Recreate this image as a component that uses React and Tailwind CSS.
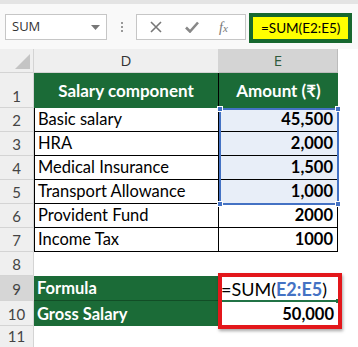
import React from 'react';

const rows = [
  { n: 1, h: 35 },
  { n: 2, h: 24, d: 'Basic salary', e: '45,500', sel: true },
  { n: 3, h: 24, d: 'HRA', e: '2,000', sel: true },
  { n: 4, h: 24, d: 'Medical Insurance', e: '1,500', sel: true },
  { n: 5, h: 24, d: 'Transport Allowance', e: '1,000', sel: true },
  { n: 6, h: 24, d: 'Provident Fund', e: '2000' },
  { n: 7, h: 24, d: 'Income Tax', e: '1000' },
  { n: 8, h: 24 },
  { n: 9, h: 25 },
  { n: 10, h: 25 },
  { n: 11, h: 22 },
];

const RowHead = ({ n, h, active }) => (
  <div
    style={{ height: h }}
    className={`flex items-end justify-center pb-[1px] border-r border-b border-[#d4d4d4] text-[15px] leading-[20px] text-[#444] ${active ? 'bg-[#d6d6d6]' : 'bg-[#efefef]'}`}
  >
    {n}
  </div>
);

export default function App() {
  return (
    <div className="relative w-[358px] h-[347px] overflow-hidden bg-white font-['Lato','Noto_Sans',sans-serif] text-black">
      {/* Formula toolbar */}
      <div className="h-[49px] bg-[#f9f9f9] border-t-4 border-[#e4e4e4] flex items-start font-['Open_Sans',sans-serif]">
        <div className="mt-[10px] ml-[5px] w-[102px] h-[26px] bg-white border border-[#c6c6c6] flex items-center justify-between pl-[6px] pr-[6px]">
          <span className="text-[13px] text-[#333]">SUM</span>
          <svg width="9" height="5" viewBox="0 0 9 5"><path d="M0 0h9L4.5 5z" fill="#777" /></svg>
        </div>
        <div className="mt-[18px] ml-[14px] flex flex-col gap-[2px]">
          <span className="w-[2px] h-[2px] bg-[#999]" />
          <span className="w-[2px] h-[2px] bg-[#999]" />
          <span className="w-[2px] h-[2px] bg-[#999]" />
        </div>
        <div className="mt-[10px] ml-[13px] w-[110px] h-[26px] bg-white border border-[#c6c6c6] flex items-center">
          <svg className="ml-[13px]" width="12" height="12" viewBox="0 0 12 12">
            <path d="M1 1l10 10M11 1L1 11" stroke="#777" strokeWidth="1.6" />
          </svg>
          <svg className="ml-[23px]" width="14" height="12" viewBox="0 0 14 12">
            <path d="M1 6.5l4 4L13 1.5" stroke="#888" strokeWidth="2.6" fill="none" />
          </svg>
          <span className="ml-[20px] text-[14px] italic text-[#777] font-['Liberation_Serif',serif]">
            f<span className="text-[11px]">x</span>
          </span>
        </div>
        <div className="mt-[9px] ml-[3px] w-[103px] h-[30px] border-4 border-[#17682f] bg-[#ffff00] flex items-center pl-[8px]">
          <span className="text-[13.5px] text-black font-['Lato',sans-serif]">=SUM(E2:E5)</span>
        </div>
      </div>

      {/* Sheet */}
      <div className="grid grid-cols-[34px_185px_119px_20px]">
        {/* column headers */}
        <div className="h-[24px] bg-[#efefef] border-r border-b border-[#d4d4d4] relative">
          <svg className="absolute right-[3px] bottom-[3px]" width="15" height="15" viewBox="0 0 15 15">
            <path d="M15 0V15H0z" fill="#c4c4c4" />
          </svg>
        </div>
        <div className="h-[24px] bg-[#efefef] border-r border-b border-[#d4d4d4] flex items-center justify-center text-[15px] text-[#333] font-['Open_Sans',sans-serif]">D</div>
        <div className="h-[24px] bg-[#d4d4d4] border-r border-b border-[#bcbcbc] flex items-center justify-center text-[15px] text-[#2f5a3c] font-['Open_Sans',sans-serif]">E</div>
        <div className="h-[24px] bg-white" />

        {rows.map((r) => {
          const active = r.n === 9;
          if (r.n === 1) {
            return (
              <React.Fragment key={r.n}>
                <RowHead n={r.n} h={r.h} />
                <div style={{ height: r.h }} className="bg-[#1b6b37] border-r border-black flex items-center justify-center text-white font-bold text-[17px]">Salary component</div>
                <div style={{ height: r.h }} className="bg-[#1b6b37] flex items-center justify-center text-white font-bold text-[17px]">Amount (₹)</div>
                <div />
              </React.Fragment>
            );
          }
          if (r.d) {
            return (
              <React.Fragment key={r.n}>
                <RowHead n={r.n} h={r.h} />
                <div style={{ height: r.h }} className="border-l border-r border-b border-black flex items-end pb-[2px] pl-[3px] text-[16.5px] leading-[20px]">{r.d}</div>
                <div style={{ height: r.h }} className={`border-r border-b border-black flex items-end justify-end pb-[2px] pr-[4px] text-[16.5px] leading-[20px] font-bold ${r.sel ? 'bg-[#e8eef8]' : ''}`}>{r.e}</div>
                <div />
              </React.Fragment>
            );
          }
          if (r.n === 9 || r.n === 10) {
            return (
              <React.Fragment key={r.n}>
                <RowHead n={r.n} h={r.h} active={active} />
                <div style={{ height: r.h }} className={`bg-[#1b6b37] flex items-end pb-[2px] pl-[3px] text-white font-bold text-[16.5px] leading-[20px] ${r.n === 9 ? 'border-b border-[#124d26]' : ''}`}>
                  {r.n === 9 ? 'Formula' : 'Gross Salary'}
                </div>
                {r.n === 9 ? (
                  <div style={{ height: r.h }} className="flex items-end pb-[2px] pl-[2px] text-[18px] leading-[20px]">
                    =SUM(<span className="font-bold text-[#4472c4]">E2:E5</span>)
                  </div>
                ) : (
                  <div style={{ height: r.h }} className="flex items-end justify-end pb-[2px] pr-[4px] text-[16.5px] leading-[20px] font-bold">50,000</div>
                )}
                <div />
              </React.Fragment>
            );
          }
          return (
            <React.Fragment key={r.n}>
              <RowHead n={r.n} h={r.h} />
              <div style={{ height: r.h }} />
              <div style={{ height: r.h }} />
              <div />
            </React.Fragment>
          );
        })}
      </div>

      {/* selection E2:E5 */}
      <div className="absolute left-[219px] top-[108px] w-[120px] h-[97px] border-2 border-[#4472c4] pointer-events-none">
        <span className="absolute -left-[4px] -top-[4px] w-[6px] h-[6px] bg-[#4472c4] border border-white" />
        <span className="absolute -right-[4px] -top-[4px] w-[6px] h-[6px] bg-[#4472c4] border border-white" />
        <span className="absolute -left-[4px] -bottom-[4px] w-[6px] h-[6px] bg-[#4472c4] border border-white" />
        <span className="absolute -right-[4px] -bottom-[4px] w-[6px] h-[6px] bg-[#4472c4] border border-white" />
      </div>

      {/* active cell line + red highlight */}
      <div className="absolute left-[222px] top-[300px] w-[116px] h-[2px] bg-[#217346]" />
      <div className="absolute left-[336px] top-[299px] w-[4px] h-[4px] bg-[#217346]" />
      <div className="absolute left-[218px] top-[273px] w-[124px] h-[56px] border-4 border-[#e3171b] shadow-[1px_2px_3px_rgba(0,0,0,0.35)] pointer-events-none" />
    </div>
  );
}
